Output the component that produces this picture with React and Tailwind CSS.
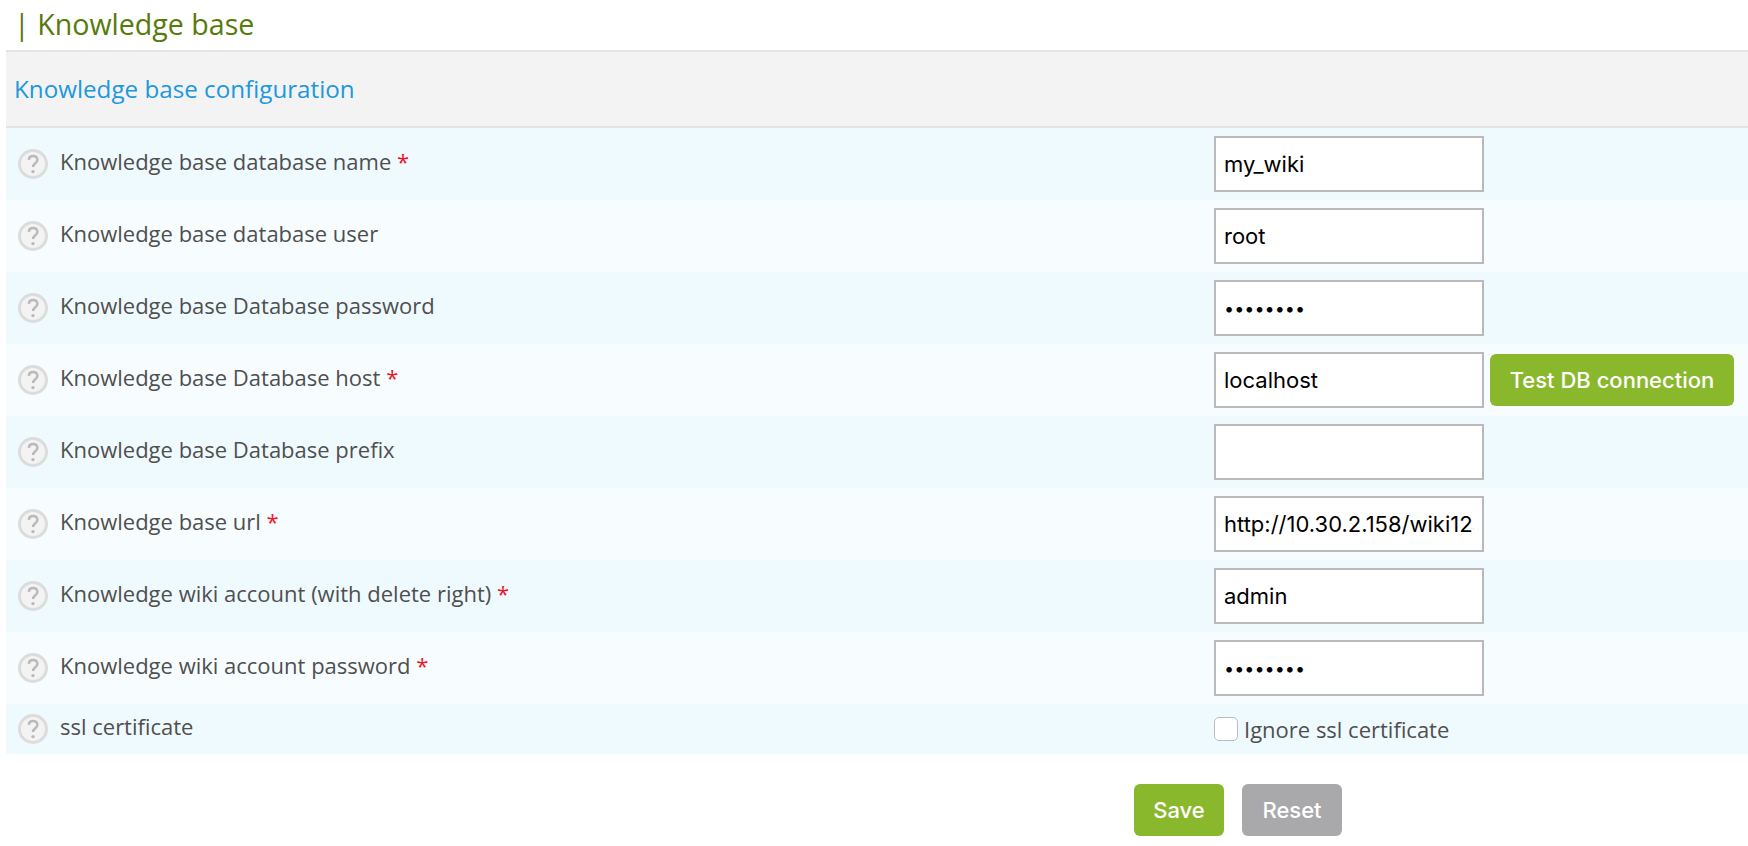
const rows = [
  { label: 'Knowledge base database name', required: true, value: 'my_wiki' },
  { label: 'Knowledge base database user', value: 'root' },
  { label: 'Knowledge base Database password', value: 'password', type: 'password' },
  { label: 'Knowledge base Database host', required: true, value: 'localhost', test: true },
  { label: 'Knowledge base Database prefix', value: '' },
  { label: 'Knowledge base url', required: true, value: 'http://10.30.2.158/wiki123/' },
  { label: 'Knowledge wiki account (with delete right)', required: true, value: 'admin' },
  { label: 'Knowledge wiki account password', required: true, value: 'password', type: 'password' },
];

const HelpIcon = () => (
  <svg viewBox="0 0 30 30" className="h-[30px] w-[30px] shrink-0">
    <circle cx="15" cy="15" r="13.5" fill="#f3f3f3" stroke="#dcdcdc" strokeWidth="3" />
    <path d="M10.8 10.8C11 8.4 12.8 6.9 15.1 6.9c2.5 0 4.3 1.6 4.3 3.8 0 3.4-4.4 3.6-4.4 7.3" fill="none" stroke="#b9b9b9" strokeWidth="2.5" />
    <circle cx="15" cy="22.6" r="1.7" fill="#b9b9b9" />
  </svg>
);

const App = () => {
  return (
    <div className="min-h-[846px] bg-white font-['Open_Sans',sans-serif] text-[22px] text-[#4f4f4f]">
      {/* Title */}
      <h1 className="flex h-[50px] items-center pb-[2px] pl-[14px] text-[28.6px] leading-none text-[#587a0c]">| Knowledge base</h1>

      <div className="ml-[6px]">
        {/* Section header */}
        <div className="flex h-[78px] items-center border-y-2 border-[#e4e4e4] bg-[#f3f3f3] pl-[8px] text-[24.2px] text-[#2098dd]">
          Knowledge base configuration
        </div>

        {rows.map((row, i) => (
          <div key={row.label} className={`flex h-[72px] items-center ${i % 2 === 0 ? 'bg-[#effaff]' : 'bg-[#f7fdff]'}`}>
            <div className="flex w-[1208px] items-center gap-[12px] pl-[12px]">
              <HelpIcon />
              <span className="-mt-[5px]">
                {row.label}
                {row.required && <span className="text-[#f0141e]"> *</span>}
              </span>
            </div>
            <input
              readOnly
              type={row.type || 'text'}
              value={row.value}
              className={`h-[56px] w-[270px] border-2 border-[#bababd] bg-white px-[8px] font-['Inter',sans-serif] text-black outline-none ${row.type === 'password' ? 'text-[18px]' : 'text-[22px]'}`}
            />
            {row.test && (
              <button className="ml-[6px] h-[52px] w-[244px] rounded-[6px] bg-[#8ab82c] font-['Inter',sans-serif] text-[22px] font-medium text-white">
                Test DB connection
              </button>
            )}
          </div>
        ))}

        {/* ssl row */}
        <div className="flex h-[50px] items-center bg-[#effaff]">
          <div className="flex w-[1208px] items-center gap-[12px] pl-[12px]">
            <HelpIcon />
            <span className="-mt-[5px]">ssl certificate</span>
          </div>
          <label className="flex items-center gap-[6px]">
            <input type="checkbox" className="h-[24px] w-[24px] appearance-none rounded-[5px] border border-[#bcbcbc] bg-white" />
            <span>Ignore ssl certificate</span>
          </label>
        </div>

        {/* Actions */}
        <div className="mt-[30px] flex gap-[18px] pl-[1128px]">
          <button className="h-[52px] w-[90px] rounded-[6px] bg-[#8ab82c] font-['Inter',sans-serif] text-[22px] font-medium text-white">
            Save
          </button>
          <button className="h-[52px] w-[100px] rounded-[6px] bg-[#a9a9ac] font-['Inter',sans-serif] text-[22px] font-medium text-white">
            Reset
          </button>
        </div>
      </div>
    </div>
  );
};

export default App;
